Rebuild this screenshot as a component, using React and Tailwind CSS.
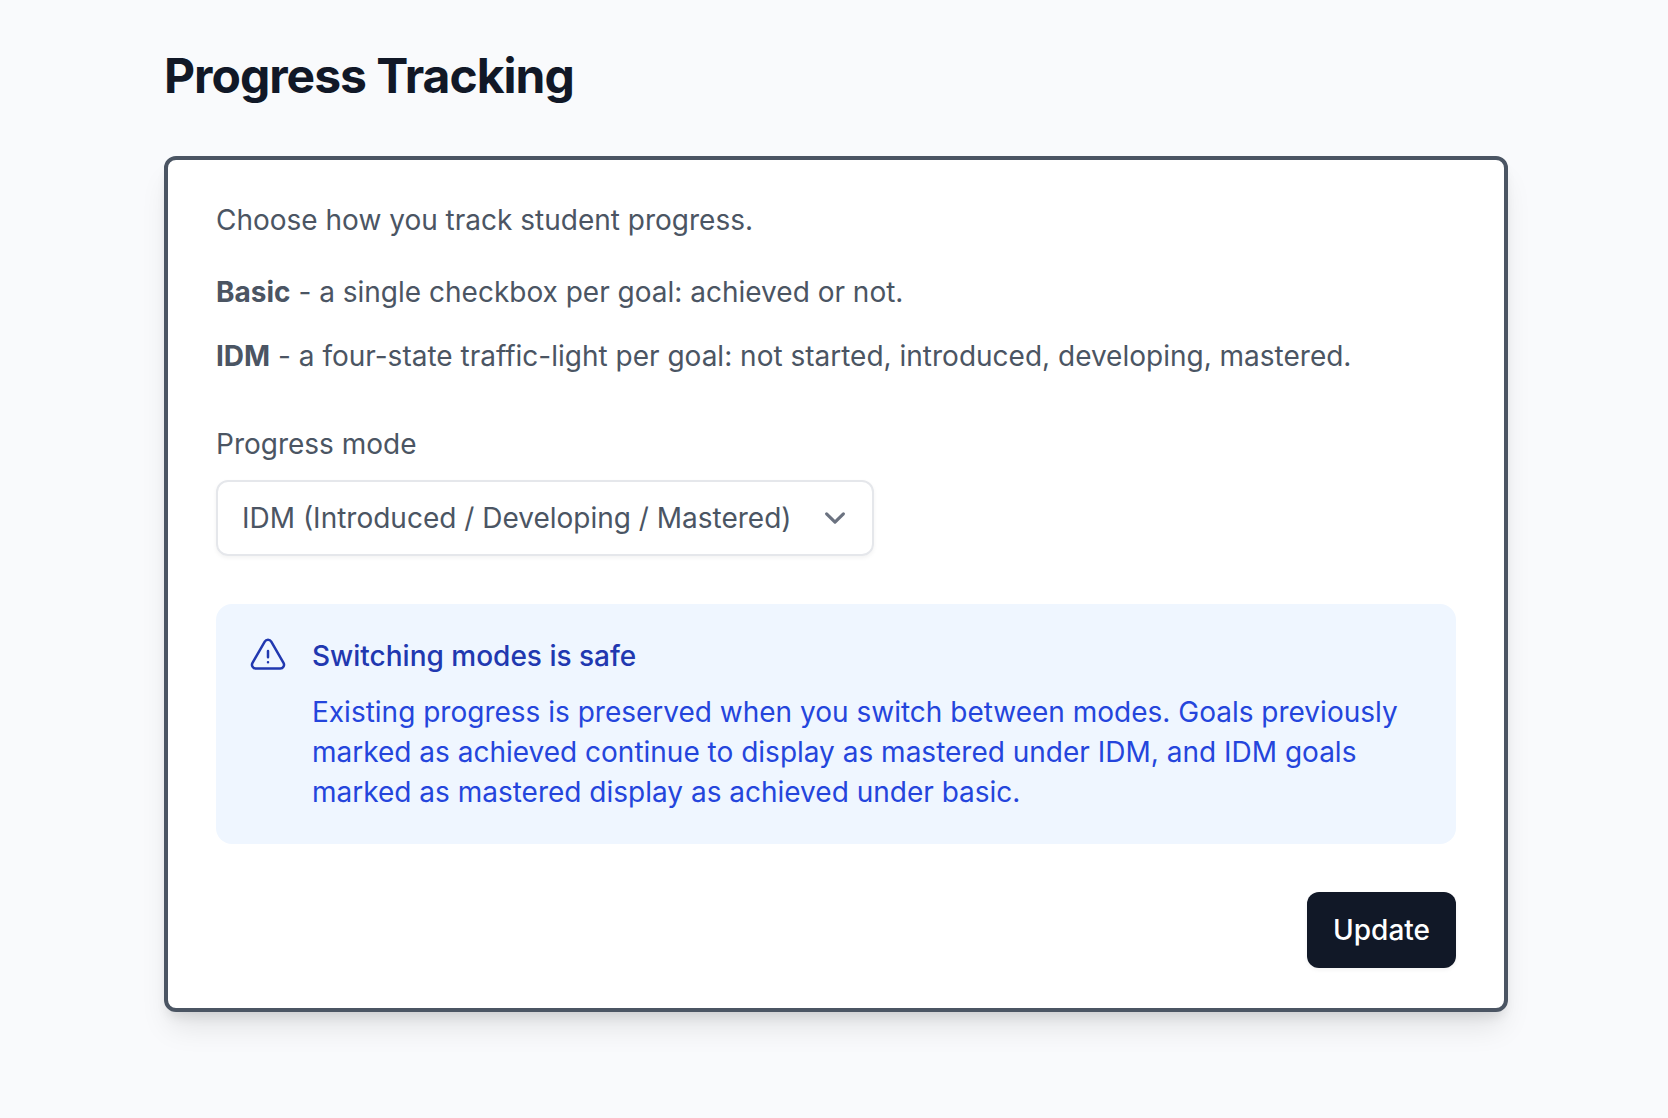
import { useState } from "react";

function WarningIcon({ className }) {
  return (
    <svg
      viewBox="0 0 24 24"
      fill="none"
      stroke="currentColor"
      strokeWidth="1.5"
      strokeLinecap="round"
      strokeLinejoin="round"
      aria-hidden="true"
      className={className}
    >
      <path d="M12 9v3.75m-9.303 3.376c-.866 1.5.217 3.374 1.948 3.374h14.71c1.73 0 2.813-1.874 1.948-3.374L13.949 3.378c-.866-1.5-3.032-1.5-3.898 0L2.697 16.126ZM12 15.75h.007v.008H12v-.008Z" />
    </svg>
  );
}

function ChevronIcon({ className }) {
  return (
    <svg
      viewBox="0 0 20 20"
      fill="none"
      stroke="currentColor"
      strokeWidth="1.5"
      strokeLinecap="round"
      strokeLinejoin="round"
      aria-hidden="true"
      className={className}
    >
      <path d="M6 8l4 4 4-4" />
    </svg>
  );
}

export default function App() {
  const [mode, setMode] = useState("idm");

  return (
    <main className="min-h-screen bg-[#f9fafc] pt-11 pb-24 pl-1 font-[Inter,sans-serif] text-[28px] leading-10 text-[#4b5563]">
      <div className="mx-auto w-full max-w-[1344px]">
        <h1 className="mb-12 text-5xl leading-[64px] font-bold tracking-[-1px] text-[#111827]">
          Progress Tracking
        </h1>

        <form
          onSubmit={(e) => e.preventDefault()}
          className="rounded-xl border-4 border-[#4b5563] bg-white px-12 py-10 shadow-[0_20px_30px_-6px_rgb(0_0_0/0.1),0_8px_12px_-4px_rgb(0_0_0/0.1)]"
        >
          <p>Choose how you track student progress.</p>
          <p className="mt-8">
            <strong className="font-bold">Basic</strong> - a single checkbox per goal: achieved or not.
          </p>
          <p className="mt-6">
            <strong className="font-bold">IDM</strong> - a four-state traffic-light per goal: not started,
            introduced, developing, mastered.
          </p>

          <div className="mt-12 flex flex-col items-start gap-4">
            <label htmlFor="mode">Progress mode</label>
            <div className="grid items-center rounded-xl shadow-[0_2px_4px_0_rgb(0_0_0/0.05)]">
              <select
                id="mode"
                value={mode}
                onChange={(e) => setMode(e.target.value)}
                className="col-start-1 row-start-1 h-[76px] appearance-none rounded-xl border-2 border-[#e5e7eb] bg-white pr-20 pl-6"
              >
                <option value="basic">Basic (Achieved / Not achieved)</option>
                <option value="idm">IDM (Introduced / Developing / Mastered)</option>
              </select>
              <ChevronIcon className="pointer-events-none col-start-1 row-start-1 mr-[18px] size-[42px] justify-self-end text-[#6b7280]" />
            </div>
          </div>

          <div className="mt-12 flex gap-6 rounded-2xl bg-[#eff6ff] p-8">
            <WarningIcon className="size-10 shrink-0 text-[#2138b0]" />
            <div>
              <h2 className="font-medium text-[#2138b0]">Switching modes is safe</h2>
              <p className="mt-4 text-[#2445dc]">
                Existing progress is preserved when you switch between modes. Goals previously marked as
                achieved continue to display as mastered under IDM, and IDM goals marked as mastered
                display as achieved under basic.
              </p>
            </div>
          </div>

          <div className="mt-12 flex justify-end">
            <button
              type="submit"
              className="h-[76px] rounded-xl bg-[#111827] px-[26px] font-medium text-white shadow-[0_2px_4px_0_rgb(0_0_0/0.05)]"
            >
              Update
            </button>
          </div>
        </form>
      </div>
    </main>
  );
}
